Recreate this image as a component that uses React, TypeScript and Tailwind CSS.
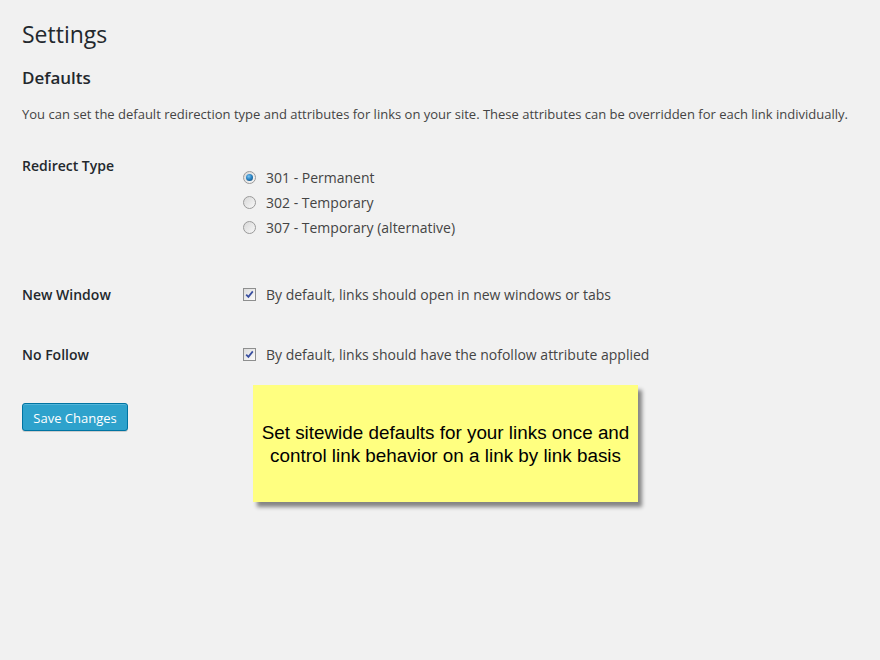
const font = { fontFamily: '"Open Sans", "Liberation Sans", sans-serif' };

function Radio({ checked }: { checked?: boolean }) {
  return (
    <span className="flex h-[13px] w-[13px] items-center justify-center rounded-full border border-[#9a9a9a] bg-gradient-to-br from-[#d8d8d8] to-[#f8f8f8]">
      {checked && (
        <span className="h-[7px] w-[7px] rounded-full bg-[radial-gradient(circle_at_40%_35%,#7cc4f2_0%,#2a84c4_45%,#0f3f66_100%)]" />
      )}
    </span>
  );
}

function Checkbox() {
  return (
    <span className="flex h-[13px] w-[13px] items-center justify-center border border-[#8e8f8f] bg-gradient-to-br from-[#dcdcdc] to-[#fbfbfb]">
      <svg width="9" height="9" viewBox="0 0 9 9">
        <path d="M1.2 4.6 L3.4 6.9 L7.8 1.4" fill="none" stroke="#3a4fa0" strokeWidth="1.7" />
      </svg>
    </span>
  );
}

export default function App() {
  const radios = [
    { label: '301 - Permanent', checked: true },
    { label: '302 - Temporary' },
    { label: '307 - Temporary (alternative)' },
  ];

  return (
    <div className="relative h-[660px] w-[880px] bg-[#f1f1f1] px-[22px] pt-[20px] text-[#444]" style={font}>
      <h1 className="text-[23px] leading-[29px] font-normal text-[#23282d]">Settings</h1>
      <h2 className="mt-[18px] text-[17px] leading-[22px] font-semibold text-[#23282d]">Defaults</h2>
      <p className="mt-[15px] text-[13px] leading-[20px]">
        You can set the default redirection type and attributes for links on your site. These attributes can be overridden for each link individually.
      </p>

      {/* Redirect type */}
      <div className="mt-[32px] flex">
        <div className="w-[221px] text-[14px] leading-[20px] font-semibold text-[#23282d]">Redirect Type</div>
        <div className="pt-[8.5px]">
          {radios.map((r) => (
            <label key={r.label} className="flex h-[25px] items-center gap-[10px] text-[14px]">
              <Radio checked={r.checked} />
              <span>{r.label}</span>
            </label>
          ))}
        </div>
      </div>

      <div className="mt-[45px] flex items-center">
        <div className="w-[221px] text-[14px] leading-[20px] font-semibold text-[#23282d]">New Window</div>
        <label className="flex items-center gap-[10px] text-[14px] leading-[20px]">
          <Checkbox />
          <span>By default, links should open in new windows or tabs</span>
        </label>
      </div>

      <div className="mt-[40px] flex items-center">
        <div className="w-[221px] text-[14px] leading-[20px] font-semibold text-[#23282d]">No Follow</div>
        <label className="flex items-center gap-[10px] text-[14px] leading-[20px]">
          <Checkbox />
          <span>By default, links should have the nofollow attribute applied</span>
        </label>
      </div>

      <button className="mt-[38px] h-[28px] w-[106px] rounded-[3px] border border-[#0074a2] bg-[#2ea2cc] pt-[3px] text-[13px] leading-[20px] text-white shadow-[inset_0_1px_0_rgba(120,200,230,0.5),0_1px_0_rgba(0,0,0,0.15)]">
        Save Changes
      </button>

      {/* annotation note */}
      <div
        className="absolute left-[253px] top-[385px] flex h-[117px] w-[385px] items-center justify-center bg-[#ffff80] text-center text-[18.85px] leading-[23px] text-black shadow-[4px_5px_4px_rgba(0,0,0,0.45)]"
        style={{ fontFamily: '"Liberation Sans", Arial, sans-serif' }}
      >
        Set sitewide defaults for your links once and
        <br />
        control link behavior on a link by link basis
      </div>
    </div>
  );
}
